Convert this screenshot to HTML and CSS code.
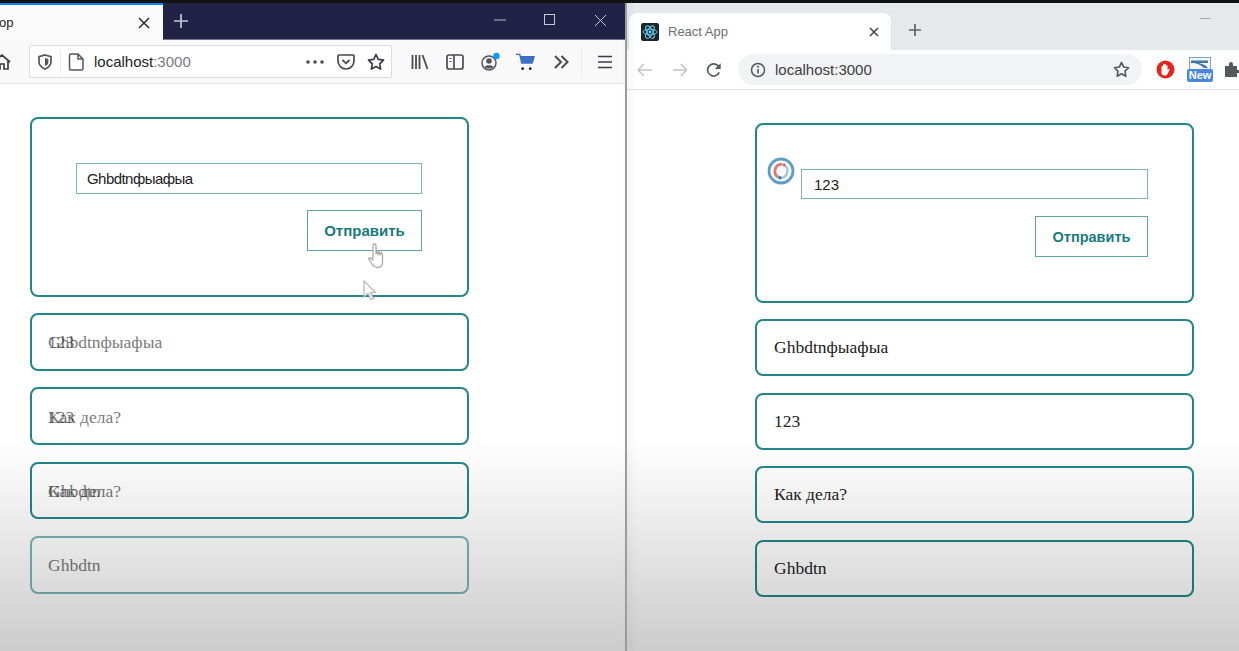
FILE: index.html
```html
<!DOCTYPE html>
<html lang="en">
<head>
    <meta charset="UTF-8">
    <meta name="viewport" content="width=device-width, initial-scale=1.0">
    <title>React App</title>
    <link rel="stylesheet" href="styles.css">
</head>
<body>

    <div class="screen">

        <!-- Firefox window -->
        <section class="window ff">
            <div class="ff-titlebar">
                <div class="ff-tab">
                    <span class="ff-tab-title">op</span>
                    <svg class="ff-tab-close" width="12" height="12" viewBox="0 0 12 12"><path d="M1 1l10 10M11 1L1 11" stroke="#2b2b33" stroke-width="1.5" fill="none"/></svg>
                </div>
                <svg class="ff-newtab" width="16" height="16" viewBox="0 0 16 16"><path d="M8 1v14M1 8h14" stroke="#c6c8d6" stroke-width="1.7" fill="none"/></svg>
                <div class="win-controls">
                    <svg width="12" height="12" viewBox="0 0 12 12"><path d="M0 6h12" stroke="#b9bbcb" stroke-width="1" fill="none"/></svg>
                    <svg width="12" height="12" viewBox="0 0 12 12"><rect x=".5" y=".5" width="10" height="10" stroke="#c6c8d6" fill="none"/></svg>
                    <svg width="13" height="13" viewBox="0 0 13 13"><path d="M1 1l11 11M12 1L1 12" stroke="#c6c8d6" stroke-width="1" fill="none"/></svg>
                </div>
            </div>

            <div class="ff-toolbar">
                <svg class="ff-home" width="11" height="18" viewBox="0 0 11 18"><path d="M-7 9L2 2l8 7M-4 8v8h4v-5h4v5h4V8" stroke="#3d3d44" stroke-width="1.7" fill="none"/></svg>
                <div class="ff-urlbar">
                    <svg class="ff-shield" width="14" height="16" viewBox="0 0 14 16"><path d="M7 1l6 1.6V8c0 3.3-2.6 5.6-6 7-3.400-1.400-6-3.700-6-7V2.600z" stroke="#55555c" stroke-width="1.700" fill="none"/><path d="M7 4l3.400.9V8c0 1.800-1.400 3.200-3.400 4.100z" fill="#55555c"/></svg>
                    <span class="ff-url-sep"></span>
                    <svg class="ff-page" width="16" height="18" viewBox="0 0 16 18"><path d="M3 1h7l5 5v9.500a1.500 1.500 0 0 1-1.500 1.500h-10.500a1.500 1.500 0 0 1-1.500-1.500v-13a1.500 1.500 0 0 1 1.500-1.500zM10 1v5h5" stroke="#55555c" stroke-width="1.500" fill="none"/></svg>
                    <span class="ff-url">localhost<span class="ff-port">:3000</span></span>
                    <svg class="ff-dots" width="18" height="4" viewBox="0 0 18 4"><circle cx="2" cy="2" r="1.800" fill="#4a4a50"/><circle cx="9" cy="2" r="1.800" fill="#4a4a50"/><circle cx="16" cy="2" r="1.800" fill="#4a4a50"/></svg>
                    <svg class="ff-pocket" width="18" height="16" viewBox="0 0 18 16"><path d="M2 1h14a1 1 0 0 1 1 1v5a8 8 0 0 1-16 0V2a1 1 0 0 1 1-1z" stroke="#47474e" stroke-width="1.700" fill="none"/><path d="M5.500 6L9 9.300 12.500 6" stroke="#47474e" stroke-width="1.800" fill="none"/></svg>
                    <svg class="ff-star" width="18" height="18" viewBox="0 0 18 18"><path d="M9 1.500l2.300 4.900 5.200.7-3.800 3.700.9 5.300L9 13.500l-4.600 2.600.9-5.300-3.800-3.700 5.200-.7z" stroke="#3d3d44" stroke-width="1.700" fill="none" stroke-linejoin="round"/></svg>
                </div>
                <div class="ff-tools">
                    <svg width="18" height="16" viewBox="0 0 18 16"><path d="M1.500 1v14M5 1v14M8.500 1v14M11.500 1l5 14" stroke="#4a4a50" stroke-width="1.800" fill="none"/></svg>
                    <svg width="18" height="16" viewBox="0 0 18 16"><rect x="1" y="1" width="16" height="14" rx="2" stroke="#4a4a50" stroke-width="1.700" fill="none"/><path d="M8 1v14" stroke="#4a4a50" stroke-width="1.700"/><path d="M3.500 4.500h2M3.500 7.500h2" stroke="#4a4a50" stroke-width="1"/></svg>
                    <svg width="20" height="20" viewBox="0 0 20 20"><circle cx="8" cy="11" r="7" stroke="#55555c" stroke-width="1.500" fill="none"/><circle cx="8" cy="9" r="2.800" fill="#55555c"/><path d="M3.500 15c1-2.500 8-2.500 9 0-2 2-7 2-9 0z" fill="#55555c"/><circle cx="15.500" cy="4" r="3.200" fill="#0a9bf5"/></svg>
                    <svg class="ff-cart" width="19" height="18" viewBox="0 0 20 18"><path d="M0 1h4l2 9h11l2-6.500H5" fill="none" stroke="#3d6fc4" stroke-width="1.500"/><path d="M5 3.500h14L17 10H6.500z" fill="#3d6fc4"/><circle cx="7" cy="16" r="1.500" fill="#222"/><circle cx="15" cy="16" r="1.500" fill="#222"/></svg>
                    <svg class="ff-more" width="15" height="14" viewBox="0 0 15 14"><path d="M1 1l6 6-6 6M7.500 1l6 6-6 6" stroke="#4a4a50" stroke-width="2" fill="none"/></svg>
                </div>
                <span class="ff-tool-sep"></span>
                <svg class="ff-menu" width="14" height="14" viewBox="0 0 14 14"><path d="M0 1.500h14M0 7h14M0 12.500h14" stroke="#3d3d44" stroke-width="1.700" fill="none"/></svg>
            </div>

            <div class="app app-left">
                <div class="card form-card">
                    <input class="text-input" type="text" value="Ghbdtnфыафыа">
                    <button class="send-btn" type="button">Отправить</button>
                </div>
                <div class="card msg">
                    <span class="msg-layer">123</span>
                    <span class="msg-layer">Ghbdtnфыафыа</span>
                </div>
                <div class="card msg">
                    <span class="msg-layer">123</span>
                    <span class="msg-layer">Как дела?</span>
                </div>
                <div class="card msg">
                    <span class="msg-layer">Как дела?</span>
                    <span class="msg-layer">Ghbdtn</span>
                </div>
                <div class="card msg msg-entering">
                    <span class="msg-layer">Ghbdtn</span>
                </div>

                <!-- recording cursors -->
                <svg class="cursor-hand" width="20" height="26" viewBox="0 0 20 26"><path d="M6 13V2.500a1.500 1.500 0 0 1 3 0V11l1 -3 1 3 1-2.500 1 3 1.500-2 1 3v7c0 3-2 5-5 5s-4-1-6-4l-3-5c1-1.500 2-1 4 1.500z" fill="#fff" stroke="#a8a8a8" stroke-width="1.300"/></svg>
                <svg class="cursor-arrow" width="14" height="21" viewBox="0 0 14 21"><path d="M1 1v16l4-3.500 3 6 2.500-1-3-6h5z" fill="#fff" stroke="#b5b5b5" stroke-width="1.200"/></svg>
            </div>
        </section>

        <div class="divider"></div>

        <!-- Chrome window -->
        <section class="window cr">
            <div class="cr-tabstrip">
                <div class="cr-tab">
                    <svg class="cr-favicon" width="18" height="18" viewBox="0 0 18 18"><rect width="18" height="18" rx="2" fill="#20232a"/><g stroke="#61dafb" stroke-width=".9" fill="none"><ellipse cx="9" cy="9" rx="7" ry="2.800"/><ellipse cx="9" cy="9" rx="7" ry="2.800" transform="rotate(60 9 9)"/><ellipse cx="9" cy="9" rx="7" ry="2.800" transform="rotate(120 9 9)"/></g><circle cx="9" cy="9" r="1.400" fill="#61dafb"/></svg>
                    <span class="cr-tab-title">React App</span>
                    <svg class="cr-tab-close" width="10" height="10" viewBox="0 0 10 10"><path d="M1 1l8 8M9 1L1 9" stroke="#45484d" stroke-width="1.600" fill="none"/></svg>
                </div>
                <svg class="cr-newtab" width="14" height="14" viewBox="0 0 14 14"><path d="M7 1v12M1 7h12" stroke="#5f6368" stroke-width="1.700" fill="none"/></svg>
                <span class="cr-minimize"></span>
            </div>

            <div class="cr-toolbar">
                <svg width="16" height="14" viewBox="0 0 16 14"><path d="M15 7H1.500M7 1L1 7l6 6" stroke="#c2c4c7" stroke-width="1.500" fill="none"/></svg>
                <svg class="cr-forward" width="16" height="14" viewBox="0 0 16 14"><path d="M1 7h13.500M9 1l6 6-6 6" stroke="#c2c4c7" stroke-width="1.500" fill="none"/></svg>
                <svg class="cr-reload" width="16" height="16" viewBox="0 0 16 16"><path d="M13.500 10.500A6.200 6.200 0 1 1 13 4.500" stroke="#55585c" stroke-width="1.700" fill="none"/><path d="M15 1v6H9z" fill="#55585c"/></svg>
                <div class="cr-omnibox">
                    <svg width="16" height="16" viewBox="0 0 16 16"><circle cx="8" cy="8" r="6.500" stroke="#55585c" stroke-width="1.500" fill="none"/><path d="M8 7v4.500" stroke="#55585c" stroke-width="1.600"/><circle cx="8" cy="4.800" r="1" fill="#55585c"/></svg>
                    <span class="cr-url">localhost:3000</span>
                    <svg class="cr-star" width="17" height="17" viewBox="0 0 18 18"><path d="M9 1.500l2.300 4.900 5.200.7-3.800 3.700.9 5.300L9 13.500l-4.600 2.600.9-5.300-3.800-3.700 5.200-.7z" stroke="#55585c" stroke-width="1.700" fill="none" stroke-linejoin="round"/></svg>
                </div>
                <svg class="cr-ext-stop" width="19" height="19" viewBox="0 0 19 19"><circle cx="9.500" cy="9.500" r="9" fill="#e8231a"/><path d="M5.500 9V6.500a1 1 0 0 1 1.500 0V4.500a1 1 0 0 1 1.500 0 1 1 0 0 1 1.500 0V5.500a1 1 0 0 1 1.500 0V10l1-1c.8-.5 1.500.2 1 1l-2 4c-.5 1-1.500 1.500-2.500 1.500H8.500C6.500 15.500 5.500 14 5.500 13z" fill="#fff"/></svg>
                <div class="cr-ext-new">
                    <svg width="22" height="13" viewBox="0 0 22 13"><rect x=".5" y=".5" width="21" height="12" fill="#f4f7fa" stroke="#7f9fc2"/><path d="M2 3.500h17v2.500H10c3 1 7 2 9 5h-4C12 8 8 6 2 6z" fill="#3f76a8"/></svg>
                    <span class="cr-new-label">New</span>
                </div>
                <svg class="cr-ext-puzzle" width="14" height="17" viewBox="0 0 14 17"><path d="M0 5h4V3a2 2 0 0 1 4 0v2h4v4h2v3h-2v4H0z" fill="#55585c"/></svg>
            </div>

            <div class="app app-right">
                <div class="card form-card">
                    <input class="text-input" type="text" value="123">
                    <button class="send-btn" type="button">Отправить</button>
                </div>
                <div class="card msg"><span class="msg-layer">Ghbdtnфыафыа</span></div>
                <div class="card msg"><span class="msg-layer">123</span></div>
                <div class="card msg"><span class="msg-layer">Как дела?</span></div>
                <div class="card msg"><span class="msg-layer">Ghbdtn</span></div>

                <svg class="spinner" width="28" height="28" viewBox="0 0 28 28"><circle cx="14" cy="14" r="12" fill="#f6fafc" stroke="#5c9fc0" stroke-width="2.800"/><path d="M15 7.200A7 7 0 0 0 11.500 20.300" stroke="#e0776a" stroke-width="2.800" fill="none"/><path d="M17 8A7 7 0 0 1 14 21" stroke="#a9c0cc" stroke-width="2.200" fill="none"/><circle cx="17" cy="7.800" r="1.600" fill="#d9695c"/><circle cx="13" cy="20.700" r="1.700" fill="#2f7fb5"/></svg>
            </div>
        </section>

    </div>

    <!-- player shade over the bottom of the video frame -->
    <div class="shade"></div>

</body>
</html>
```

FILE: styles.css
```css
* {
    box-sizing: border-box;
}
html, body {
    margin: 0;
    height: 100%;
    overflow: hidden;
}
body {
    background-color: #fff;
    font-family: "Liberation Sans", Arial, sans-serif;
}
.screen {
    display: flex;
    width: 1239px;
    height: 651px;
    border-top: 3px solid #111;
}
.window {
    display: flex;
    flex-direction: column;
    height: 100%;
    overflow: hidden;
}
.ff {
    width: 625px;
}
.cr {
    width: 612px;
}
.divider {
    position: relative;
    z-index: 1;
    width: 2px;
    background-color: #9b9c9e;
    box-shadow: 3px 0 7px rgba(0, 0, 0, .13);
}

/* firefox chrome */
.ff-titlebar {
    display: flex;
    align-items: center;
    flex: 0 0 37px;
    background-color: #202345;
    border-bottom: 1px solid #74768f;
}
.ff-tab {
    display: flex;
    align-items: center;
    justify-content: space-between;
    width: 163px;
    height: calc(100% + 1px);
    margin-bottom: -1px;
    padding-right: 13px;
    background-color: #fbfbfc;
    border-top: 2px solid #0a84ff;
    color: #222;
    font-size: 13px;
}
.ff-tab-title {
    margin-left: -1px;
}
.ff-newtab {
    margin-left: 10px;
}
.win-controls {
    display: flex;
    align-items: center;
    gap: 38px;
    margin-left: auto;
    margin-bottom: 2px;
    padding-right: 18px;
}
.ff-toolbar {
    display: flex;
    align-items: center;
    flex: 0 0 44px;
    background-color: #f9f9fa;
    border-bottom: 1px solid #e3e3e5;
}
.ff-home {
    flex: none;
}
.ff-urlbar {
    display: flex;
    align-items: center;
    flex: none;
    width: 363px;
    height: 33px;
    margin-left: 18px;
    padding-left: 8px;
    background-color: #fff;
    border: 1px solid #dcdcde;
    border-radius: 2px;
}
.ff-url-sep {
    width: 1px;
    height: 24px;
    margin-left: 8px;
    background-color: #e8e8ea;
}
.ff-page {
    margin-left: 7px;
}
.ff-url {
    margin-left: 10px;
    color: #222;
    font-size: 15px;
}
.ff-port {
    color: #7b7b80;
}
.ff-dots {
    margin-left: auto;
}
.ff-pocket {
    margin-left: 13px;
}
.ff-star {
    margin-left: 12px;
    margin-right: 6px;
}
.ff-tools {
    display: flex;
    align-items: center;
    gap: 17px;
    margin-left: 19px;
}
.ff-cart {
    margin-left: -2px;
}
.ff-more {
    margin-left: 2px;
}
.ff-tool-sep {
    width: 1px;
    height: 32px;
    margin-left: 12px;
    background-color: #ececee;
}
.ff-menu {
    margin-left: 16px;
}

/* chrome browser */
.cr-tabstrip {
    display: flex;
    align-items: flex-end;
    flex: 0 0 47px;
    background-color: #e6e9ec;
    padding-left: 2px;
}
.cr-tab {
    display: flex;
    align-items: center;
    width: 262px;
    height: 37px;
    padding: 0 12px;
    background-color: #fff;
    border-radius: 8px 8px 0 0;
}
.cr-favicon {
    flex: none;
}
.cr-tab-title {
    margin-left: 9px;
    color: #6b6f74;
    font-size: 13px;
}
.cr-tab-close {
    margin-left: auto;
    margin-right: 0;
}
.cr-newtab {
    align-self: center;
    margin: 7px 0 0 17px;
}
.cr-minimize {
    align-self: flex-start;
    width: 11px;
    height: 1px;
    margin: 15px 0 0 auto;
    margin-right: 28px;
    background-color: #a9abae;
}
.cr-toolbar {
    display: flex;
    align-items: center;
    flex: 0 0 40px;
    padding-left: 10px;
    background-color: #fff;
    border-bottom: 1px solid #dfe1e4;
}
.cr-forward {
    margin-left: 19px;
}
.cr-reload {
    margin-left: 19px;
}
.cr-omnibox {
    display: flex;
    align-items: center;
    flex: none;
    width: 404px;
    height: 31px;
    margin-left: 16px;
    padding: 0 12px;
    background-color: #f1f3f4;
    border-radius: 16px;
}
.cr-url {
    margin-left: 9px;
    color: #3c4043;
    font-size: 15px;
}
.cr-star {
    margin-left: auto;
}
.cr-ext-stop {
    margin-left: 14px;
    flex: none;
}
.cr-ext-new {
    display: flex;
    flex-direction: column;
    align-items: center;
    flex: none;
    width: 26px;
    margin-left: 12px;
}
.cr-new-label {
    width: 26px;
    margin-top: -1px;
    background-color: #4a86e0;
    border-radius: 2px;
    color: #fff;
    font-size: 11px;
    font-weight: bold;
    line-height: 13px;
    text-align: center;
}
.cr-ext-puzzle {
    margin-left: 12px;
    flex: none;
}

/* the app itself */
.app {
    position: relative;
    display: flex;
    flex-direction: column;
    flex: 1;
    background-color: #fff;
}
.app-left {
    padding: 33px 0 0 30px;
    gap: 16.9px;
}
.app-right {
    padding: 33px 0 0 128px;
    gap: 16.67px;
}
.card {
    flex: none;
    width: 439px;
    background-color: #fff;
    border: 2px solid #23868a;
    border-radius: 8px;
}
.form-card {
    display: flex;
    flex-direction: column;
    align-items: flex-end;
    height: 180px;
    margin-bottom: -.9px;
    padding: 44px 45px 0 44px;
}
.app-right .form-card {
    margin-bottom: -.67px;
    padding: 44px 44px 0;
}
.text-input {
    width: 100%;
    height: 31px;
    padding: 0 10px;
    background-color: #fff;
    border: 1px solid #7fb4b4;
    color: #222;
    font-family: "Liberation Sans", Arial, sans-serif;
    font-size: 15px;
    letter-spacing: -.55px;
    outline: none;
}
.app-right .text-input {
    height: 30px;
    padding: 0 12px;
    letter-spacing: 0;
}
.send-btn {
    width: 115px;
    height: 41px;
    margin-top: 16px;
    background-color: #fff;
    border: 1px solid #5fa3a3;
    color: #177b7e;
    font-family: "Liberation Sans", Arial, sans-serif;
    font-size: 15px;
    font-weight: bold;
}
.app-right .send-btn {
    width: 113px;
    margin-top: 17px;
    font-size: 14.500px;
}
.msg {
    display: grid;
    align-items: center;
    height: 57.500px;
    padding: 2px 0 0 16px;
    color: #222;
    font-family: "Liberation Serif", "Times New Roman", serif;
    font-size: 17.500px;
}
.app-right .msg {
    height: 57px;
    padding: 0 0 0 17px;
}
.msg-layer {
    grid-area: 1 / 1;
}
.app-left .msg-layer {
    opacity: .6;
}
.msg-entering {
    border-color: #23868a99;
}
.cursor-hand {
    position: absolute;
    left: 367px;
    top: 159px;
}
.cursor-arrow {
    position: absolute;
    left: 363px;
    top: 196px;
}
.spinner {
    position: absolute;
    left: 140px;
    top: 67px;
}

.shade {
    position: absolute;
    left: 0;
    right: 0;
    bottom: 0;
    height: 211px;
    background: linear-gradient(to bottom, rgba(0, 0, 0, 0), rgba(0, 0, 0, .2));
    pointer-events: none;
}
```
